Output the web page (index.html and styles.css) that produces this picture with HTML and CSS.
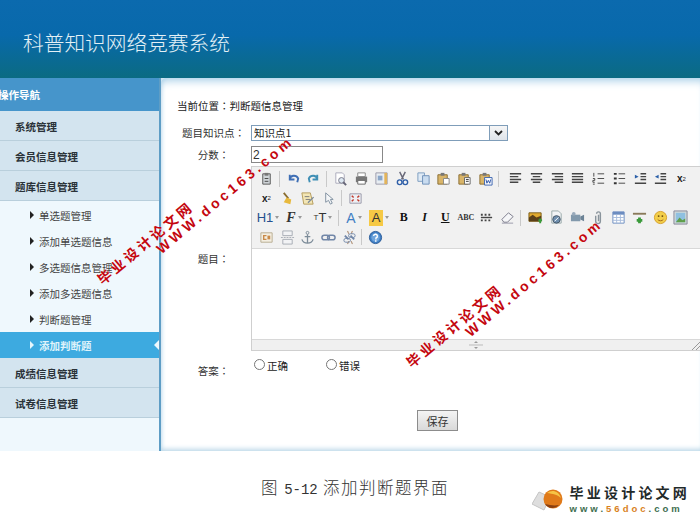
FILE: index.html
```html
<!DOCTYPE html>
<html lang="zh-CN">
	<head>
		<meta charset="utf-8">
		<title>科普知识网络竞赛系统</title>
		<link rel="stylesheet" href="styles.css">
	</head>
	<body>
		<div class="top"><h1>科普知识网络竞赛系统</h1></div>
		<div class="main">
			<div class="side">
				<div class="sideTitle">操作导航</div>
				<div class="navItem">系统管理</div>
				<div class="navItem">会员信息管理</div>
				<div class="navItem">题库信息管理</div>
				<div class="subList">
					<div class="subItem">单选题管理</div>
					<div class="subItem">添加单选题信息</div>
					<div class="subItem">多选题信息管理</div>
					<div class="subItem">添加多选题信息</div>
					<div class="subItem">判断题管理</div>
					<div class="subItem on">添加判断题</div>
				</div>
				<div class="navItem">成绩信息管理</div>
				<div class="navItem">试卷信息管理</div>
			</div>
			<div class="content">
				<p class="crumb">当前位置<span class="colon" lang="zh-TW">：</span>判断题信息管理</p>
				<div class="row rowSelect">
					<label>题目知识点<span class="colon" lang="zh-TW">：</span></label>
					<div class="select"><span>知识点1</span><i class="arrow"><svg width="9" height="6" viewBox="0 0 9 6"><path d="M1 1l3.500 3.500L8 1" fill="none" stroke="#222" stroke-width="1.800"/></svg></i></div>
				</div>
				<div class="row rowScore">
					<label>分数<span class="colon" lang="zh-TW">：</span></label>
					<input class="score" value="2">
				</div>
				<div class="row rowEditor">
					<label>题目<span class="colon" lang="zh-TW">：</span></label>
					<div class="editor">
						<div class="tools">
							<div class="toolRow">
								<b class="ic"><svg viewBox="0 0 16 16"><path d="M4 3h8v11H4z" fill="#cfd4d8" stroke="#555"/><path d="M6 2h4v3H6z" fill="#777"/><path d="M6 8h4M6 11h4" stroke="#444"/></svg></b>
								<u class="sep"></u>
								<b class="ic"><svg viewBox="0 0 16 16"><path d="M4 9c1-5 7-5 9-1l-1 4M4 4v5h5" fill="none" stroke="#3f6fb5" stroke-width="2"/></svg></b>
								<b class="ic"><svg viewBox="0 0 16 16"><path d="M12 9c-1-5-7-5-9-1l1 4M12 4v5H7" fill="none" stroke="#3f8fb5" stroke-width="2"/></svg></b>
								<u class="sep"></u>
								<b class="ic"><svg viewBox="0 0 16 16"><path d="M3 2h7l2 2v9H3z" fill="#fff" stroke="#aab"/><circle cx="9" cy="10" r="3" fill="#dde8f2" stroke="#778"/><path d="M11 12l3 3" stroke="#667" stroke-width="2"/></svg></b>
								<b class="ic"><svg viewBox="0 0 16 16"><path d="M4 2h8v4H4z" fill="#fff" stroke="#888"/><path d="M2 6h12v6H2z" fill="#777"/><path d="M4 10h8v4H4z" fill="#fff" stroke="#666"/></svg></b>
								<b class="ic"><svg viewBox="0 0 16 16"><path d="M2 2h12v12H2z" fill="#e8edf2" stroke="#99a"/><path d="M11 2h3v12h-3z" fill="#e3b45a"/><path d="M4 5h5v5H4z" fill="#8aa6c8"/></svg></b>
								<b class="ic"><svg viewBox="0 0 16 16"><path d="M5 1l4 8M11 1L7 9" stroke="#667" stroke-width="1.500"/><circle cx="5" cy="12" r="2.500" fill="none" stroke="#2f5fa8" stroke-width="1.500"/><circle cx="11" cy="12" r="2.500" fill="none" stroke="#2f5fa8" stroke-width="1.500"/></svg></b>
								<b class="ic"><svg viewBox="0 0 16 16"><path d="M2 2h7v9H2z" fill="#dfeaf5" stroke="#7c9cc0"/><path d="M7 5h7v9H7z" fill="#c9dcf0" stroke="#6d8fb8"/></svg></b>
								<b class="ic"><svg viewBox="0 0 16 16"><path d="M2 4h10v10H2z" fill="#d9b56a" stroke="#8a6d30"/><path d="M5 2h4v3H5z" fill="#777"/><path d="M8 8h6v6H8z" fill="#fff" stroke="#888"/></svg></b>
								<b class="ic"><svg viewBox="0 0 16 16"><path d="M2 4h10v10H2z" fill="#d9b56a" stroke="#8a6d30"/><path d="M5 2h4v3H5z" fill="#777"/><path d="M8 7h6v7H8z" fill="#fff" stroke="#666"/><path d="M9.500 9h3M9.500 11h3" stroke="#333"/></svg></b>
								<b class="ic"><svg viewBox="0 0 16 16"><path d="M2 4h10v10H2z" fill="#d9b56a" stroke="#8a6d30"/><path d="M5 2h4v3H5z" fill="#777"/><path d="M7 7h8v8H7z" fill="#fff" stroke="#3a62b0"/><path d="M8.500 9l1 4 1.500-3 1.500 3 1-4" fill="none" stroke="#2a52a8"/></svg></b>
								<u class="sep sepWide"></u>
								<b class="ic"><svg viewBox="0 0 16 16"><path d="M2 3h12M2 6h9M2 9h12M2 12h9" stroke="#444" stroke-width="1.500"/></svg></b>
								<b class="ic"><svg viewBox="0 0 16 16"><path d="M2 3h12M4 6h8M2 9h12M4 12h8" stroke="#444" stroke-width="1.500"/></svg></b>
								<b class="ic"><svg viewBox="0 0 16 16"><path d="M2 3h12M5 6h9M2 9h12M5 12h9" stroke="#444" stroke-width="1.500"/></svg></b>
								<b class="ic"><svg viewBox="0 0 16 16"><path d="M2 3h12M2 6h12M2 9h12M2 12h12" stroke="#444" stroke-width="1.500"/></svg></b>
								<b class="ic"><svg viewBox="0 0 16 16"><path d="M7 3h7M7 8h7M7 13h7" stroke="#444"/><path d="M3 2v4M2 8h2v2H2v2h2M2 14h2" fill="none" stroke="#444"/></svg></b>
								<b class="ic"><svg viewBox="0 0 16 16"><path d="M7 3h7M7 8h7M7 13h7" stroke="#444"/><path d="M2 2h3v2H2zM2 7h3v2H2zM2 12h3v2H2z" fill="#333"/></svg></b>
								<b class="ic"><svg viewBox="0 0 16 16"><path d="M8 3h6M8 6h6M8 9h6M2 13h12" stroke="#444" stroke-width="1.500"/><path d="M2 4l4 2-4 2z" fill="#2a5fa8"/></svg></b>
								<b class="ic"><svg viewBox="0 0 16 16"><path d="M8 3h6M8 6h6M8 9h6M2 13h12" stroke="#444" stroke-width="1.500"/><path d="M6 4L2 6l4 2z" fill="#2a5fa8"/></svg></b>
								<b class="ic txt subx">x<sub>2</sub></b>
							</div>
							<div class="toolRow">
								<b class="ic txt subx">x<sup>2</sup></b>
								<b class="ic"><svg viewBox="0 0 16 16"><path d="M4 2l5 6" stroke="#8a6d30" stroke-width="2"/><path d="M7 7l5 2-1 5-7-2z" fill="#e8b93c"/></svg></b>
								<b class="ic"><svg viewBox="0 0 16 16"><path d="M2 2h9l3 12H4z" fill="#f3e6b5" stroke="#b39a5a"/><path d="M5 6h5M6 9h5" stroke="#777"/><path d="M8 12l6-6 1 1-6 6z" fill="#7a8a9a"/></svg></b>
								<b class="ic"><svg viewBox="0 0 16 16"><path d="M5 2v10l3-2 2 4 2-1-2-4h3z" fill="#f4f6f8" stroke="#8090a0"/></svg></b>
								<u class="sep"></u>
								<b class="ic"><svg viewBox="0 0 16 16"><path d="M2 3h12v10H2z" fill="#eef0f4" stroke="#99a"/><path d="M4 5l2 2M12 5l-2 2M4 11l2-2M12 11l-2-2" stroke="#c0392b" stroke-width="1.500"/></svg></b>
							</div>
							<div class="toolRow">
								<b class="ic txt wide h1">H1<s></s></b>
								<b class="ic txt wide fam">F<s></s></b>
								<b class="ic txt wide tt"><small>T</small>T<s></s></b>
								<u class="sep"></u>
								<b class="ic txt wide colorA">A<s></s></b>
								<b class="ic txt wide bgA"><em>A</em><s></s></b>
								<b class="ic txt bold boldFirst">B</b>
								<b class="ic txt bold it">I</b>
								<b class="ic txt bold un">U</b>
								<b class="ic txt abc">ABC</b>
								<b class="ic"><svg viewBox="0 0 16 16"><path d="M2 8h12" stroke="#444" stroke-width="1.500"/><path d="M2 4h2v2H2zM6 4h2v2H6zM10 4h2v2h-2zM2 10h2v2H2zM6 10h2v2H6zM10 10h2v2h-2z" fill="#444"/></svg></b>
								<b class="ic"><svg viewBox="0 0 16 16"><path d="M2 10l7-7 5 4-6 6H4z" fill="#f5f6f8" stroke="#778"/><path d="M2 14h12" stroke="#99a"/></svg></b>
								<u class="sep sepMid"></u>
								<b class="ic"><svg viewBox="0 0 16 16"><path d="M1 3h13v9H1z" fill="#e0a92e" stroke="#7a5c1a"/><path d="M1 8l4-3 4 3 5-2v6H1z" fill="#5a3f18"/><path d="M11 11h4M13 9v5" stroke="#3a9a3a" stroke-width="2"/></svg></b>
								<b class="ic"><svg viewBox="0 0 16 16"><path d="M3 1h7l3 3v10H3z" fill="#f2f4f6" stroke="#9aa"/><circle cx="8" cy="10" r="4" fill="#6f8fae" stroke="#456"/><path d="M6 12l4-4" stroke="#fff"/></svg></b>
								<b class="ic"><svg viewBox="0 0 16 16"><path d="M1 5h10v7H1z" fill="#8299ac"/><path d="M11 7l4-2v7l-4-2z" fill="#6c8396"/><circle cx="4" cy="4" r="2" fill="#9ab"/></svg></b>
								<b class="ic"><svg viewBox="0 0 16 16"><path d="M6 4a2 2 0 0 1 4 0v8a2.500 2.500 0 0 1-5 0V6M8 5v7" fill="none" stroke="#8a949c" stroke-width="1.500"/></svg></b>
								<b class="ic"><svg viewBox="0 0 16 16"><path d="M2 2h12v12H2z" fill="#fff" stroke="#6b8cc0"/><path d="M2 2h12v3H2z" fill="#6b8cc0"/><path d="M2 8h12M2 11h12M6 5v9M10 5v9" stroke="#a8bcdc"/></svg></b>
								<b class="ic"><svg viewBox="0 0 16 16"><path d="M1 3h14v2H1z" fill="#8a7a5a"/><path d="M8 8v6M5 11h6" stroke="#3a9a3a" stroke-width="3"/></svg></b>
								<b class="ic"><svg viewBox="0 0 16 16"><circle cx="8" cy="8" r="6.500" fill="#f3cf4a" stroke="#d69f2a"/><circle cx="6" cy="6.500" r="1" fill="#6b4a10"/><circle cx="10" cy="6.500" r="1" fill="#6b4a10"/><path d="M5 10c1 2 5 2 6 0" fill="none" stroke="#a0651a"/></svg></b>
								<b class="ic"><svg viewBox="0 0 16 16"><path d="M1 1h14v14H1z" fill="#cfd8d8" stroke="#889"/><path d="M3 3h10v10H3z" fill="#8fc0e0"/><path d="M3 13l4-5 3 3 3-2v4z" fill="#5f9f4a"/></svg></b>
							</div>
							<div class="toolRow">
								<b class="ic"><svg viewBox="0 0 16 16"><path d="M2 3h12v10H2z" fill="#f4efe2" stroke="#b8ac90"/><path d="M9 6h3v4H9z" fill="#c98a4a"/><path d="M8 6H5v4h3" fill="none" stroke="#c98a4a" stroke-width="1.500"/></svg></b>
								<b class="ic"><svg viewBox="0 0 16 16"><path d="M3 1h10v5H3zM3 10h10v5H3z" fill="#f2f3f5" stroke="#a6acb4"/><path d="M1 8h14" stroke="#a6acb4" stroke-dasharray="2 1"/></svg></b>
								<b class="ic"><svg viewBox="0 0 16 16"><circle cx="8" cy="3" r="1.500" fill="none" stroke="#7d8c99"/><path d="M8 4.500V14M5 7h6M2 10c1 3 3 4 6 4s5-1 6-4" fill="none" stroke="#7d8c99" stroke-width="1.400"/></svg></b>
								<b class="ic"><svg viewBox="0 0 16 16"><rect x="1" y="5.500" width="8" height="5" rx="2.500" fill="none" stroke="#7287a8" stroke-width="1.600"/><rect x="7" y="5.500" width="8" height="5" rx="2.500" fill="none" stroke="#7287a8" stroke-width="1.600"/></svg></b>
								<b class="ic"><svg viewBox="0 0 16 16"><path d="M3 6l4 4M9 6l4 4" stroke="#7287a8" stroke-width="2"/><path d="M6 1l1 3M11 1l-1 3M6 15l1-3M11 15l-1-3" stroke="#a07a5a"/><rect x="2" y="9" width="7" height="4" rx="2" fill="none" stroke="#7287a8"/><rect x="7" y="4" width="7" height="4" rx="2" fill="none" stroke="#7287a8"/></svg></b>
								<u class="sep"></u>
								<b class="ic"><svg viewBox="0 0 16 16"><circle cx="8" cy="8" r="6.500" fill="#3f7fc4" stroke="#2a5a98"/><circle cx="8" cy="8" r="4.500" fill="#6ea4dc"/><path d="M6 6.500a2 2 0 1 1 2.500 2V10" fill="none" stroke="#fff" stroke-width="1.500"/><path d="M7.500 11h1.500v1.500H7.500z" fill="#fff"/></svg></b>
							</div>
						</div>
						<div class="area"></div>
						<div class="status">
							<svg class="grip" width="14" height="8" viewBox="0 0 14 8"><path d="M0 4h14" stroke="#bbb"/><path d="M5 2h4L7 0zM5 6h4L7 8z" fill="#999"/></svg>
							<svg class="corner" width="9" height="9" viewBox="0 0 9 9"><path d="M1 9l8-8M5 9l4-4" stroke="#999"/></svg>
						</div>
					</div>
				</div>
				<div class="row rowAnswer">
					<label>答案<span class="colon" lang="zh-TW">：</span></label>
					<div class="radios">
						<span class="radio"><input type="radio" name="da">正确</span>
						<span class="radio"><input type="radio" name="da">错误</span>
					</div>
				</div>
				<div class="saveRow"><button class="save">保存</button></div>
			</div>
		</div>
		<div class="foot">
			<p class="caption">图 <span>5-12</span> 添加判断题界面</p>
			<div class="logo">
				<svg width="34" height="24" viewBox="0 0 34 24"><path d="M0 17L7 5l11 5-6 13z" fill="#dedede" stroke="#c4c4c4"/><circle cx="21" cy="12" r="9.500" fill="#e07a1a"/><path d="M15 6c5-4 12-2 14 5-4-4-8-4-14-5z" fill="#f6c445"/><path d="M13 17c3 5 10 5 14 1-5 1-9 0-14-1z" fill="#8a3f10"/></svg>
				<div>
					<div class="logoName">毕业设计论文网</div>
					<div class="logoUrl">www.<span>56doc</span>.com</div>
				</div>
			</div>
		</div>
		<div class="mark markA"><div class="markName">毕业设计论文网</div><div class="markUrl">WWW.doc163.com</div></div>
		<div class="mark markB"><div class="markName">毕业设计论文网</div><div class="markUrl">WWW.doc163.com</div></div>
	</body>
</html>
```

FILE: styles.css
```css
html,body{
	margin:0;
	padding:0;
}
body{
	width:700px;
	height:515px;
	overflow:hidden;
	position:relative;
	background-color:white;
	font-family:"Noto Sans CJK SC","Liberation Sans",sans-serif;
	font-size:10.5px;
	color:#222;
}
.top{
	height:78px;
	background:linear-gradient(#0b6aae 0%,#0869ab 45%,#0b6b82 100%);
	display:flex;
	align-items:center;
	padding:6px 0 0 23px;
	box-sizing:border-box;
}
.top h1{
	margin:0;
	font-size:20.700px;
	font-weight:300;
	color:#e4f1f6;
}
.main{
	display:flex;
	height:373px;
	background-color:#cfe3ef;
}
.side{
	width:159px;
	background-color:#eff8fd;
	border-right:2px solid #5e9dc5;
	flex:none;
}
.sideTitle{
	height:33px;
	line-height:33px;
	background-color:#4695cb;
	color:white;
	font-weight:700;
	text-indent:-2px;
	white-space:nowrap;
}
.navItem{
	height:30px;
	line-height:31px;
	padding-left:15px;
	font-weight:700;
	color:#2a3238;
	background-color:#d3e4ef;
	border-bottom:1px solid #b9cfdc;
	box-sizing:border-box;
}
.subList{
	padding-top:1px;
}
.subItem{
	height:26px;
	line-height:27px;
	padding-left:39px;
	color:#444;
	position:relative;
}
.subItem:before{
	content:"";
	position:absolute;
	left:30px;
	top:9px;
	border-left:4px solid #222;
	border-top:4px solid transparent;
	border-bottom:4px solid transparent;
}
.subItem.on{
	background-color:#3daae0;
	color:#dff3fb;
	font-weight:700;
}
.subItem.on:before{
	border-left-color:#e6f6fc;
}
.subItem.on:after{
	content:"";
	position:absolute;
	right:0;
	top:8px;
	border-right:5px solid #eff8fd;
	border-top:5px solid transparent;
	border-bottom:5px solid transparent;
}
.content{
	flex:1;
	background-color:white;
	border-top-left-radius:5px;
	box-shadow:inset 0 9px 8px -6px #a9d0e8,inset 0 -6px 5px -4px #bcd7e8,inset 4px 0 4px -3px #c5deed;
	padding:21px 0 0 16px;
	min-width:0;
}
.crumb{
	margin:0 0 12px;
	height:14px;
	line-height:14px;
	color:#222;
}
.colon{
	font-family:"Noto Sans CJK TC",sans-serif;
}
.row{
	display:flex;
}
.row label{
	width:73px;
	margin-right:1px;
	flex:none;
	text-align:center;
	color:#333;
}
.rowSelect{
	height:16px;
	line-height:16px;
	margin-bottom:5px;
}
.select{
	width:257px;
	height:16px;
	border:1px solid #7f9db9;
	box-sizing:border-box;
	display:flex;
	justify-content:space-between;
	line-height:14px;
	padding-left:2px;
	color:#222;
}
.arrow{
	width:17px;
	border-left:1px solid #7f9db9;
	background:linear-gradient(#f6f6f6,#dfe4ea);
	display:flex;
	align-items:center;
	justify-content:center;
}
.rowScore{
	height:17px;
	line-height:17px;
	margin-bottom:3px;
}
.score{
	width:132px;
	height:17px;
	border:1px solid #888;
	box-sizing:border-box;
	padding:0 1px;
	font-family:"Liberation Sans",sans-serif;
	font-size:12px;
	color:#333;
	outline:none;
}
.rowEditor{
	height:185px;
}
.rowEditor label{
	align-self:center;
}
.editor{
	width:449px;
	height:185px;
	box-sizing:border-box;
	border:1px solid #cfcfcf;
	border-right:none;
	display:flex;
	flex-direction:column;
}
.tools{
	height:82px;
	box-sizing:border-box;
	padding:2px 0 0 4px;
	background-color:#f1f1f1;
	border-bottom:1px solid #d8d8d8;
}
.toolRow{
	display:flex;
	align-items:center;
	height:19.500px;
}
.ic{
	flex:0 0 20.700px;
	height:16px;
	display:flex;
	align-items:center;
	justify-content:center;
}
.ic svg{
	width:15px;
	height:15px;
}
.sep{
	width:1px;
	height:16px;
	background-color:#c9c9c9;
	margin:0 3px 0 2px;
	flex:none;
}
.sepWide{
	margin-right:7px;
}
.sepMid{
	margin-right:5px;
}
.txt{
	font-family:"Liberation Sans",sans-serif;
	text-decoration:none;
	color:#333;
}
.txt s{
	border-top:3px solid #999;
	border-left:2.500px solid transparent;
	border-right:2.500px solid transparent;
	margin-left:2px;
}
.wide{
	flex-basis:26px;
}
.subx{
	font-size:10px;
	font-weight:700;
	color:#222;
}
.subx sub,.subx sup{
	font-size:6px;
	font-weight:400;
}
.h1{
	font-size:13px;
	font-weight:400;
	color:#24508f;
	margin-left:-1px;
}
.fam{
	font-family:"Liberation Serif",serif;
	font-style:italic;
	font-size:14px;
	font-weight:700;
}
.tt{
	font-size:13px;
	font-weight:400;
	margin-left:3px;
}
.tt small{
	font-size:8px;
}
.colorA{
	flex-basis:24px;
	font-size:14px;
	font-weight:400;
	color:#3f7fc4;
}
.bgA{
	font-size:13px;
	font-weight:400;
}
.bgA em{
	font-style:normal;
	background-color:#f6c945;
	padding:0 3px;
	line-height:16px;
}
.bold{
	font-family:"Liberation Serif",serif;
	font-size:12px;
	font-weight:700;
	color:#111;
}
.boldFirst{
	margin-left:1.500px;
}
.it{
	font-style:italic;
}
.un{
	text-decoration:underline;
}
.abc{
	font-family:"Liberation Serif",serif;
	font-size:8px;
	font-weight:700;
}
.area{
	flex:1;
	background-color:white;
}
.status{
	height:10px;
	background-color:#f0f0f0;
	border-top:1px solid #d8d8d8;
	display:flex;
	align-items:center;
	justify-content:center;
	position:relative;
}
.corner{
	position:absolute;
	right:0;
	bottom:0;
}
.rowAnswer{
	height:30px;
	margin-top:6px;
}
.rowAnswer label{
	padding-top:6px;
}
.radios{
	display:flex;
	gap:38px;
	padding:0 0 0 3px;
}
.radio{
	display:flex;
	align-items:center;
	height:16px;
}
.radio input{
	width:11px;
	height:11px;
	margin:0 2px 0 0;
	position:relative;
	top:-1px;
}
.saveRow{
	margin-top:23px;
	padding-left:240px;
}
.save{
	width:41px;
	height:21px;
	padding:0;
	border:1px solid #8c8c8c;
	background:linear-gradient(#f4f4f4,#d9d9d9);
	font-family:inherit;
	font-size:11px;
	color:#333;
	display:block;
}
.foot{
	height:64px;
	display:flex;
	justify-content:space-between;
	padding:0 10px 0 261px;
}
.caption{
	margin:25px 0 0;
	font-size:16.500px;
	line-height:22px;
	font-weight:300;
	color:#333;
	letter-spacing:1.500px;
}
.caption span{
	font-family:"Liberation Mono",monospace;
	font-size:14px;
	letter-spacing:0;
}
.logo{
	display:flex;
	align-items:center;
	gap:4px;
	height:32px;
	margin-top:32px;
}
.logoName{
	font-size:14px;
	font-weight:700;
	letter-spacing:3.200px;
	line-height:15px;
	color:#1f2a2a;
}
.logoUrl{
	font-family:"Liberation Sans",sans-serif;
	font-size:9.500px;
	font-weight:700;
	letter-spacing:3px;
	line-height:11px;
	margin-top:3px;
	color:#3e6e50;
}
.logoUrl span{
	color:#d9821e;
}
.mark{
	position:absolute;
	transform:rotate(-40deg);
	transform-origin:0 0;
	color:#c4070f;
	font-weight:700;
	white-space:nowrap;
	pointer-events:none;
	text-shadow:0 0 1px white;
}
.markA{
	left:93px;
	top:274px;
}
.markB{
	left:402px;
	top:357px;
}
.markName{
	font-size:14px;
	letter-spacing:3.200px;
	line-height:18px;
}
.markUrl{
	font-family:"Liberation Sans",sans-serif;
	font-size:14px;
	letter-spacing:3.600px;
	line-height:18px;
	margin-left:65px;
	margin-top:-3px;
}
```
